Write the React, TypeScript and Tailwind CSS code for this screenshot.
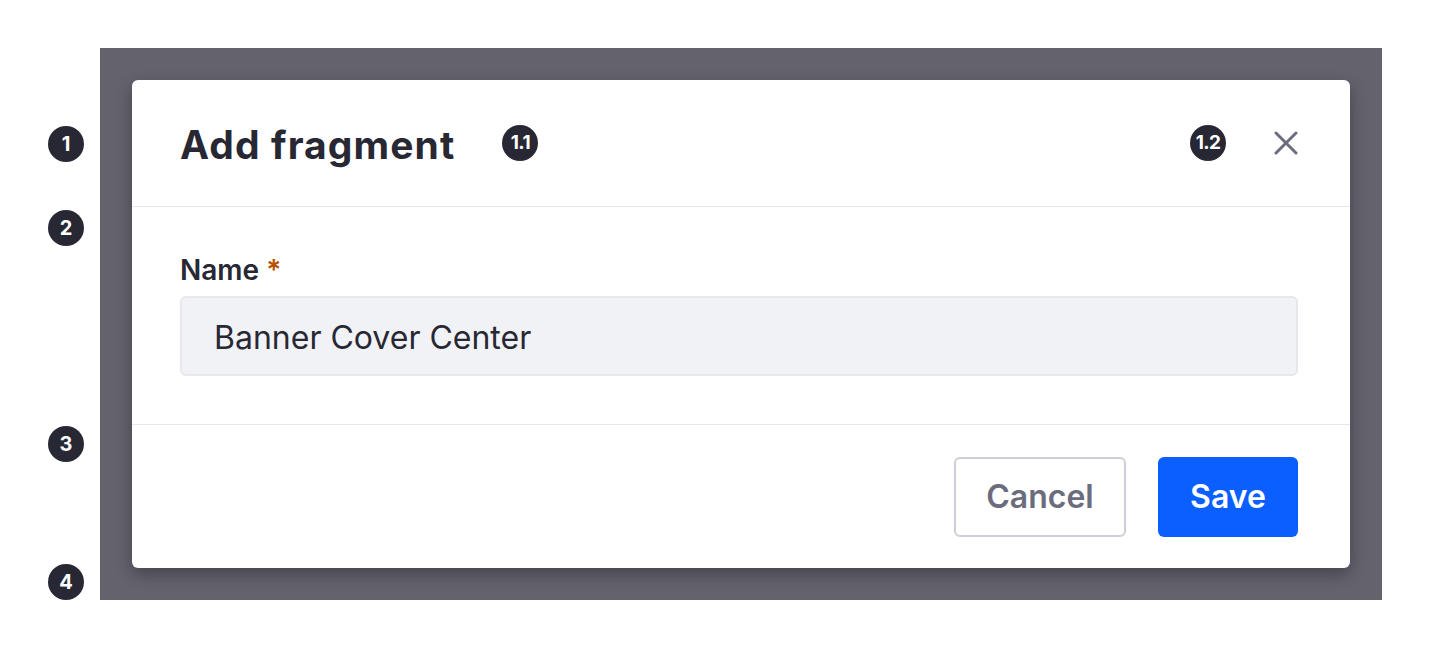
function Badge({ label }: { label: string }) {
  const small = label.length > 1;
  return (
    <span
      className={`flex h-9 w-9 shrink-0 items-center justify-center rounded-full bg-[#272833] font-bold text-white ${
        small ? 'text-[19px] tracking-[-0.6px]' : 'text-[20px]'
      }`}
    >
      {label}
    </span>
  );
}

function CloseIcon() {
  return (
    <svg width="24" height="24" viewBox="0 0 24 24" fill="none" stroke="#6b6c7e" strokeWidth="3" strokeLinecap="round">
      <path d="M2 2 L22 22" />
      <path d="M22 2 L2 22" />
    </svg>
  );
}

export default function App() {
  return (
    <div className="h-[648px] w-[1430px] bg-white font-['Inter',sans-serif] text-[#272833]">
      <div className="flex gap-4 pl-12 pt-12">
        <div className="flex h-[552px] w-9 flex-col">
          <div className="mt-[78px]">
            <Badge label="1" />
          </div>
          <div className="mt-12">
            <Badge label="2" />
          </div>
          <div className="mt-[180px]">
            <Badge label="3" />
          </div>
          <div className="mt-[102px]">
            <Badge label="4" />
          </div>
        </div>

        <div className="h-[552px] w-[1282px] bg-[#63626d] p-8">
          <div className="flex flex-col rounded-md bg-white shadow-[0_6px_16px_rgba(0,0,0,0.3)]">
            <div className="flex h-[127px] items-center border-b border-[#e7e7ed] pl-12 pr-[52px]">
              <h2 className="pt-0.5 text-[39px] font-bold leading-none tracking-[1.1px]">Add fragment</h2>
              <div className="ml-[47px]">
                <Badge label="1.1" />
              </div>
              <div className="ml-auto">
                <Badge label="1.2" />
              </div>
              <button className="ml-12 flex items-center">
                <CloseIcon />
              </button>
            </div>

            <div className="flex flex-col border-b border-[#e7e7ed] pb-12 pl-12 pr-[52px] pt-[45px]">
              <label className="text-[28px] font-semibold leading-9">
                Name <span className="text-[#b95000]">*</span>
              </label>
              <div className="mt-2 flex h-20 items-center rounded-md border-2 border-[#e7e7ed] bg-[#f1f2f5] px-8 pt-1 text-[32px]">
                Banner Cover Center
              </div>
            </div>

            <div className="flex h-[143px] items-center justify-end gap-8 pl-12 pr-[52px]">
              <button className="h-20 w-[172px] rounded-md border-2 border-[#cdced9] bg-white text-[32px] font-semibold text-[#6b6c7e]">
                Cancel
              </button>
              <button className="h-20 w-[140px] rounded-md bg-[#0b5fff] text-[32px] font-semibold text-white">
                Save
              </button>
            </div>
          </div>
        </div>
      </div>
    </div>
  );
}
